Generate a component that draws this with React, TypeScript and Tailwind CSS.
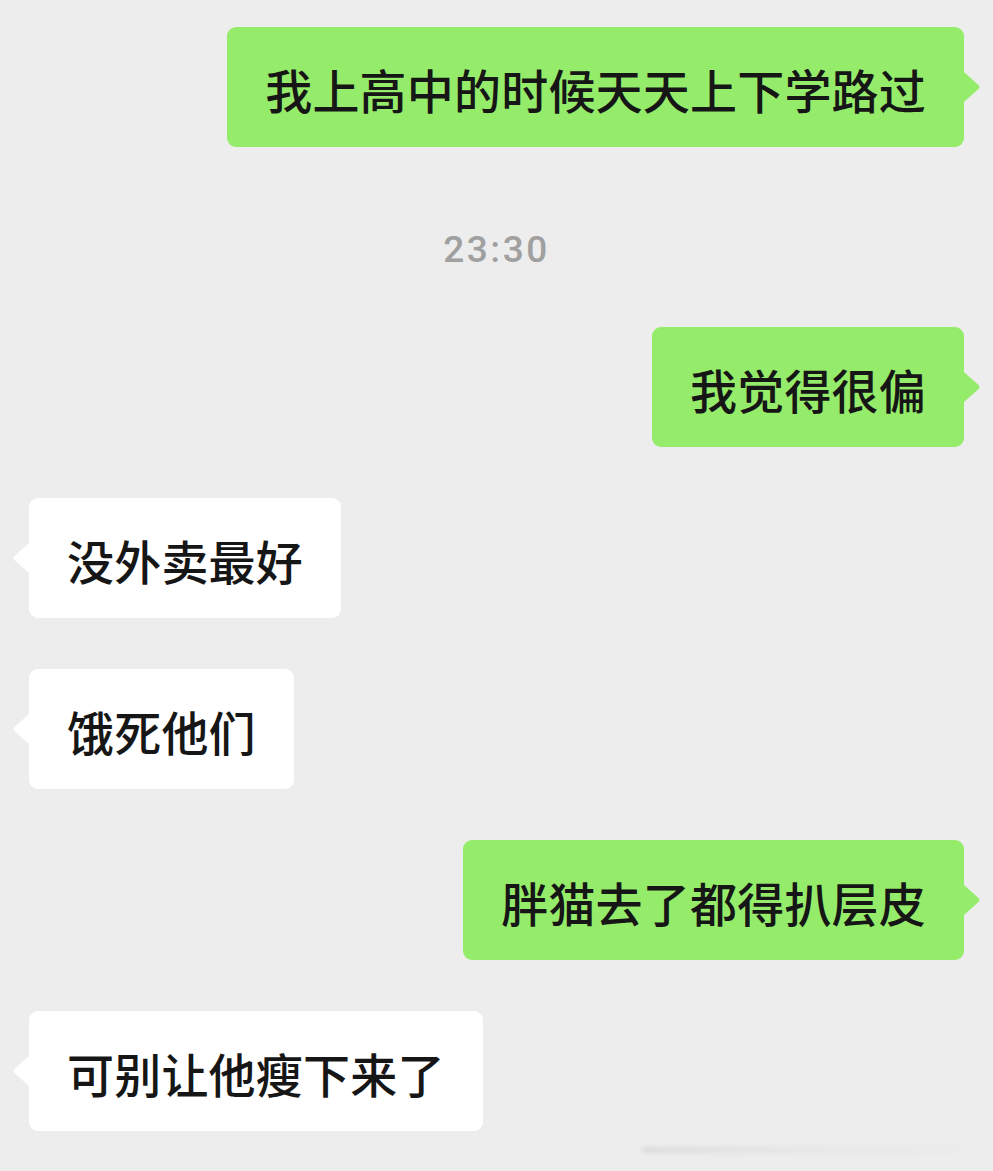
import type { ReactNode } from "react";

const cjk = "font-['PingFang_SC','Noto_Sans_CJK_SC',sans-serif]";

type Side = "me" | "them";

function Tail({ side }: { side: Side }) {
  if (side === "me") {
    return (
      <svg
        className="absolute left-full top-1/2 -translate-y-1/2"
        width="17"
        height="30"
        viewBox="0 0 17 30"
      >
        <path d="M0 0 L14.5 13 Q16.5 15 14.5 17 L0 30 Z" fill="#95ec6a" />
      </svg>
    );
  }
  return (
    <svg
      className="absolute right-full top-1/2 -translate-y-1/2"
      width="17"
      height="30"
      viewBox="0 0 17 30"
    >
      <path d="M17 0 L2.5 13 Q0.5 15 2.5 17 L17 30 Z" fill="#ffffff" />
    </svg>
  );
}

function Bubble({ side, children }: { side: Side; children: ReactNode }) {
  const me = side === "me";
  return (
    <div className={me ? "flex justify-end" : "flex justify-start"}>
      <div
        className={`relative flex h-[120px] items-center rounded-[9px] px-[38px] pt-[2px] ${
          me ? "bg-[#95ec6a]" : "bg-white"
        }`}
      >
        <span
          className={`${cjk} whitespace-nowrap text-[47px] font-medium leading-none tracking-[0.2px] text-[#161616]`}
        >
          {children}
        </span>
        <Tail side={side} />
      </div>
    </div>
  );
}

export default function App() {
  return (
    <div className="min-h-[1171px] w-[993px] overflow-hidden bg-[#ededed] px-[29px] pt-[27px]">
      <Bubble side="me">我上高中的时候天天上下学路过</Bubble>

      <div className="mb-[58px] mt-[82px] flex h-[40px] items-center justify-center">
        <span className="font-['Roboto','Liberation_Sans',sans-serif] text-[37px] font-medium leading-none tracking-[2.5px] text-[#a0a0a0]">
          23:30
        </span>
      </div>

      <div className="flex flex-col gap-[51px]">
        <Bubble side="me">我觉得很偏</Bubble>
        <Bubble side="them">没外卖最好</Bubble>
        <Bubble side="them">饿死他们</Bubble>
        <Bubble side="me">胖猫去了都得扒层皮</Bubble>
        <Bubble side="them">可别让他瘦下来了</Bubble>
      </div>

      <div className="mt-[16px] flex justify-end pr-[2px]">
        <div className="h-[6px] w-[320px] rounded-full bg-gradient-to-r from-[#dcdcdc] via-[#e6e6e6] to-[#ebebeb] blur-[2px]" />
      </div>
    </div>
  );
}
